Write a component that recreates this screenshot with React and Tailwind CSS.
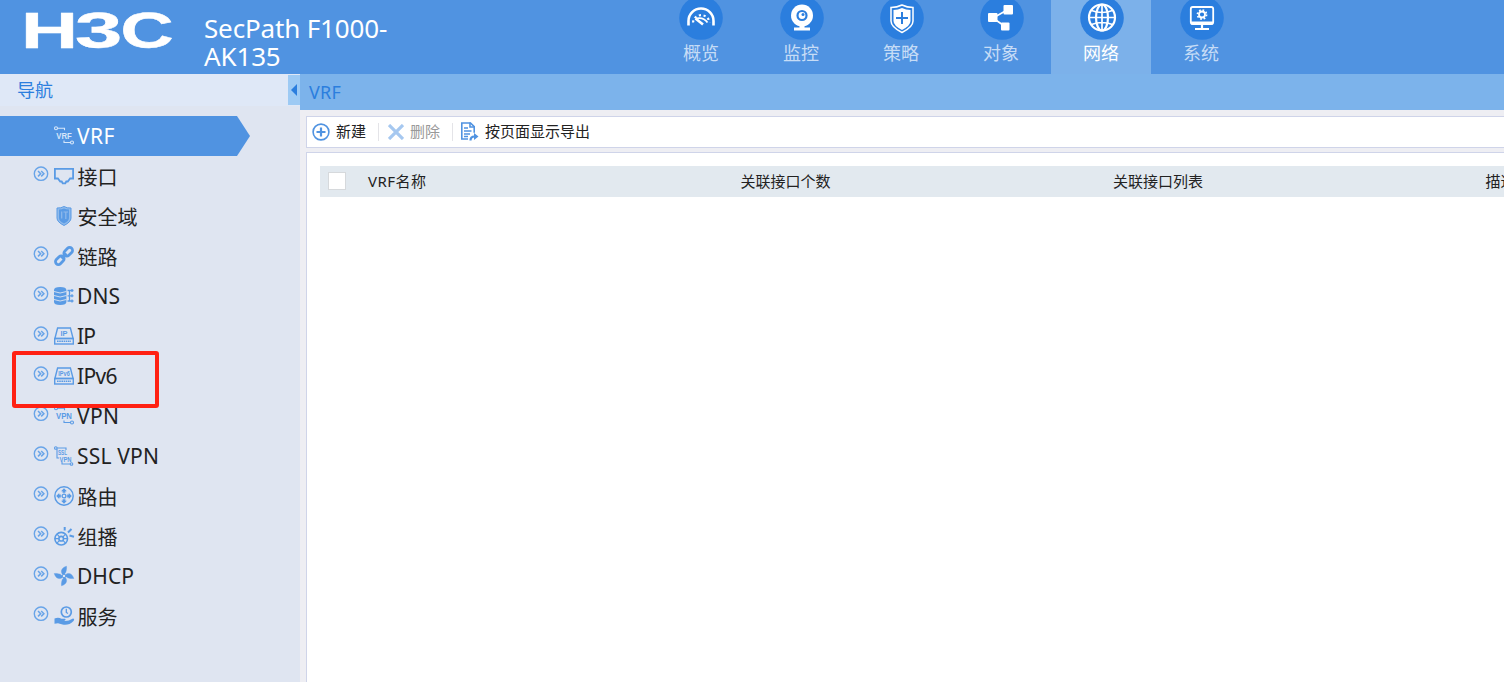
import clsx from 'clsx'

const tabs = [
  { label: '概览', icon: GaugeIcon },
  { label: '监控', icon: CameraIcon },
  { label: '策略', icon: PolicyIcon },
  { label: '对象', icon: ObjectIcon },
  { label: '网络', icon: GlobeIcon, active: true },
  { label: '系统', icon: SystemIcon },
]

const menu = [
  { label: 'VRF', icon: VrfIcon, leaf: true, active: true, tracking: 'tracking-[0.4px]' },
  { label: '接口', icon: PortIcon },
  { label: '安全域', icon: ZoneIcon, leaf: true },
  { label: '链路', icon: LinkIcon },
  { label: 'DNS', icon: DnsIcon, tracking: 'tracking-[0.1px]' },
  { label: 'IP', icon: IpIcon, tracking: 'tracking-[-0.8px]' },
  { label: 'IPv6', icon: Ipv6Icon, marked: true, tracking: 'tracking-[-0.7px]' },
  { label: 'VPN', icon: VpnIcon, tracking: 'tracking-[0.4px]' },
  { label: 'SSL VPN', icon: SslIcon, tracking: 'tracking-[0.2px]' },
  { label: '路由', icon: RouteIcon },
  { label: '组播', icon: MulticastIcon },
  { label: 'DHCP', icon: DhcpIcon, tracking: 'tracking-[0px]' },
  { label: '服务', icon: ServiceIcon },
]

const columns = ['VRF名称', '关联接口个数', '关联接口列表', '描述']

/* ---------- top tab icons, 44x44 ---------- */

function GaugeIcon() {
  return (
    <g fill="none" stroke="#fff">
      <path d="M9.500 29.500V25a12.500 12.500 0 0 1 25 0v4.500" strokeWidth="2.600" />
      <path d="M14 26.500a8.300 8.300 0 0 1 16.500 0" strokeWidth="2.200" strokeDasharray="2.200 2.600" />
      <path d="M16.500 22.500 24 28.500" strokeWidth="2.600" />
      <path d="M17.500 22.500q7-1.500 11 4" strokeWidth="1.800" />
    </g>
  )
}

function CameraIcon() {
  return (
    <g>
      <circle cx="22" cy="19.500" r="11" fill="#fff" />
      <circle cx="22" cy="19.500" r="4.500" fill="none" stroke="#2b7ede" strokeWidth="2.200" />
      <circle cx="23" cy="18.500" r="1.500" fill="#2b7ede" />
      <path d="M19.500 29h5v2.500h5.500v3H14v-3h5.500z" fill="#fff" />
    </g>
  )
}

function PolicyIcon() {
  return (
    <g>
      <path d="M22 9q5 2.500 11 2.500V25q0 6-11 11.500Q11 31 11 25V11.500Q17 11.500 22 9z" fill="none" stroke="#fff" strokeWidth="1.500" />
      <path d="M22 12q4 1.800 8.500 2V25q0 4.500-8.500 9-8.500-4.500-8.500-9V14q4.500-.2 8.500-2z" fill="#fff" />
      <path d="M22 16v12M16 22h12" stroke="#2b7ede" strokeWidth="2" />
    </g>
  )
}

function ObjectIcon() {
  return (
    <g fill="#fff">
      <path d="M13 22 28 13.500M13 22l12 8.500" stroke="#fff" strokeWidth="1.600" />
      <rect x="8" y="17" width="9.500" height="9" rx="1" />
      <rect x="23.500" y="9" width="9.500" height="9.500" rx="1" />
      <rect x="21" y="26.500" width="8.500" height="8" rx="1" />
    </g>
  )
}

function GlobeIcon() {
  return (
    <g fill="none" stroke="#fff" strokeWidth="2.200">
      <circle cx="22" cy="21.500" r="13" />
      <ellipse cx="22" cy="21.500" rx="6" ry="13" />
      <path d="M22 8.500v26M9 21.500h26M11.500 14.500q10.500 4 21 0M11.500 28.500q10.500-4 21 0" strokeWidth="1.700" />
    </g>
  )
}

function SystemIcon() {
  return (
    <g fill="none" stroke="#fff">
      <rect x="10.800" y="11" width="22.400" height="17" rx="2" strokeWidth="1.800" />
      <path d="M11 27h22" strokeWidth="3" />
      <circle cx="22" cy="18.500" r="3" strokeWidth="1.800" />
      <circle cx="22" cy="18.500" r="4.500" strokeWidth="1.800" strokeDasharray="1.700 1.834" />
      <path d="M22 28v4M15 33h14" strokeWidth="2.200" />
    </g>
  )
}

/* ---------- side menu icons, 20x20 ---------- */

function TagText({ children, x = 10, y, size, width }) {
  return (
    <text
      x={x}
      y={y}
      fontSize={size}
      fontWeight="700"
      textAnchor="middle"
      textLength={width}
      lengthAdjust="spacingAndGlyphs"
      fill="currentColor"
      stroke="none"
      fontFamily="Liberation Sans, sans-serif"
    >
      {children}
    </text>
  )
}

function Corners() {
  return (
    <g strokeWidth="1.100">
      <circle cx="2" cy="2.300" r="1.500" />
      <path d="M3.500 2.300h7v2M10 14.500v2h6.500" />
      <circle cx="18" cy="16.500" r="1.500" />
    </g>
  )
}

function VrfIcon() {
  return (
    <g>
      <Corners />
      <TagText y="12.800" size="9.500" width="15.500">VRF</TagText>
    </g>
  )
}

function VpnIcon() {
  return (
    <g>
      <Corners />
      <TagText y="12.800" size="9.500" width="16">VPN</TagText>
    </g>
  )
}

function SslIcon() {
  return (
    <g>
      <g strokeWidth="1.100">
        <circle cx="1.800" cy="2" r="1.300" />
        <path d="M3 2h9v2M3 3v9h2M8 15.500V18h8" />
        <circle cx="17.500" cy="18" r="1.300" />
      </g>
      <TagText x="8.500" y="9.300" size="7" width="9">SSL</TagText>
      <TagText x="11.500" y="15.700" size="7.500" width="12">VPN</TagText>
    </g>
  )
}

function PortIcon() {
  return <path d="M.9 2.900h18.200v9.600h-3l-2.300 3h-1.500l-1 1.800H8.700l-1-1.800H6.200l-2.300-3h-3z" strokeWidth="1.800" />
}

function ZoneIcon() {
  return (
    <g>
      <path d="M3 2q4 .3 7-1.500 3 1.800 7 1.500v10q0 4-7 7.500-7-3.500-7-7.500z" fill="#8fbaeb" strokeWidth="1" />
      <path d="M5 3.500q3 0 5-1 2 1 5 1V12q0 3-5 5.500Q5 15 5 12z" fill="currentColor" stroke="none" />
      <path d="M7.700 5.500v7M9.500 6h4.500M11.800 6v7" stroke="#8fbaeb" strokeWidth="1.200" />
    </g>
  )
}

function LinkIcon() {
  return (
    <g strokeWidth="2.800">
      <rect x="-4.900" y="-2.900" width="9.800" height="5.800" rx="2.900" transform="translate(14.200 5.800) rotate(-45)" />
      <rect x="-4.900" y="-2.900" width="9.800" height="5.800" rx="2.900" transform="translate(5.800 14.200) rotate(-45)" />
      <path d="m7.500 12.500 5-5" />
    </g>
  )
}

function DnsIcon() {
  return (
    <g>
      <path d="M0 4q0-3 6.200-3t6.200 3v12q0 3-6.200 3T0 16z" fill="currentColor" stroke="none" />
      <path d="M0 5.500q6 3 12.400 0M0 9.500q6 3 12.400 0M0 13.500q6 3 12.400 0" stroke="#dfe5f1" strokeWidth=".9" />
      <path d="M13.500 4.500h6M13.500 9.800h6M13.500 15h6M15.500 4.500V15M18 3v3M18 8.300v3M18 13.500v3" strokeWidth="1.300" />
    </g>
  )
}

function Box({ tag, size, width }) {
  return (
    <g>
      <path d="M.9 12.500 3.600 2h12.800l2.700 10.500z" strokeWidth="1.400" />
      <rect x=".7" y="12.500" width="18.600" height="5.500" strokeWidth="1.400" />
      <path d="M3 15.300h14" strokeWidth="1.600" strokeDasharray="1.600 .6" />
      <TagText y="9.800" size={size} width={width}>{tag}</TagText>
    </g>
  )
}

function IpIcon() {
  return <Box tag="IP" size="8" width="7" />
}

function Ipv6Icon() {
  return <Box tag="IPv6" size="7" width="11.500" />
}

function RouteIcon() {
  return (
    <g>
      <circle cx="10" cy="10" r="9.200" strokeWidth="1.400" />
      <circle cx="10" cy="10" r="1.900" strokeWidth="1.300" />
      <path d="m10 2.200 2.900 3h-1.500v1.600H8.600V5.200H7.100zM10 17.800l2.900-3h-1.500v-1.600H8.600v1.600H7.100zM2.200 10l3-2.900v1.500h1.600v2.800H5.200v1.500zM17.800 10l-3-2.900v1.500h-1.600v2.800h1.600v1.500z" fill="currentColor" stroke="none" />
    </g>
  )
}

function MulticastIcon() {
  return (
    <g strokeWidth="1.600">
      <circle cx="7.200" cy="12.700" r="6.300" />
      <circle cx="7.200" cy="12.700" r="2.300" />
      <path d="m3 8.200 2.700 3M11.500 8.200l-2.700 3M3 17.200l2.700-3M11.500 17.200l-2.700-3M.8 12.700h4M9.600 12.700h4" strokeWidth="1.200" />
      <path d="M10.700 4.500V1M14 6.500 17.500 3M15.500 9.500l4.500 1.300" strokeWidth="2" />
    </g>
  )
}

function DhcpIcon() {
  const blade = 'M9 8.800C6.500 6.500 6.500 2 12.500.2c.3 2-.2 4.500-.5 5.300-.5 1.800-1.500 2.800-3 3.300z'
  return (
    <g fill="currentColor" strokeWidth=".4">
      <path d={blade} />
      <path d={blade} transform="rotate(90 10 10)" />
      <path d={blade} transform="rotate(180 10 10)" />
      <path d={blade} transform="rotate(270 10 10)" />
      <circle cx="10" cy="10" r="1.800" fill="#dfe5f1" stroke="currentColor" strokeWidth="1" />
    </g>
  )
}

function ServiceIcon() {
  return (
    <g>
      <circle cx="12.300" cy="6" r="5" strokeWidth="1.700" />
      <path d="M12.300 2.800v3.700l1.700 1" strokeWidth="1.300" />
      <path d="M.5 12.500q4-1.500 7 .3h3.500q1.500 1.200-1 2.200 4 .5 9-2.500 2 .5.500 2.500-5 5-11 3.500L4 17.300l-3.500.4z" fill="currentColor" stroke="none" />
    </g>
  )
}

function Expander() {
  return (
    <svg className="-mt-[5px] h-4 w-4" viewBox="0 0 16 16" fill="none" stroke="#68a4e8">
      <circle cx="8" cy="7.700" r="6.700" strokeWidth="1.400" />
      <path d="m5 5 2.700 2.700L5 10.400M8.200 5l2.700 2.700-2.700 2.700" strokeWidth="1.500" />
    </svg>
  )
}

function Header() {
  return (
    <header className="flex h-[74px] bg-[#5093e1]">
      <div className="w-[204px] shrink-0">
        <svg className="h-[74px] w-[204px]" viewBox="0 0 204 74">
          <g fill="#fff" stroke="#fff" strokeWidth=".5" fontFamily="Liberation Sans, Arial, sans-serif" fontWeight="700" fontSize="50">
            <text transform="translate(21 47.500) scale(1.580 1)">H</text>
            <text transform="translate(75 47.500) scale(1.700 1)">3</text>
            <text transform="translate(120.500 47.500) scale(1.470 1)">C</text>
          </g>
        </svg>
      </div>
      <div className="w-[447px] shrink-0 pt-[14px] text-[26px] leading-[28px] tracking-[-0.150px] text-white">
        SecPath F1000-
        <br />
        AK135
      </div>
      <nav className="flex">
        {tabs.map(({ label, icon: Icon, active }, i) => (
          <div
            key={label}
            className={clsx(
              'flex w-[100px] flex-col items-center',
              active ? 'bg-[#7cb1ea] text-white' : 'text-[#c6dcf6]'
            )}
          >
            <svg className={clsx('-mt-1 h-11 w-11 shrink-0', i > 0 && 'ml-[2px]')} viewBox="0 0 44 44">
              <circle cx="22" cy="22" r="21.800" fill="#2b7ede" />
              <Icon />
            </svg>
            <span className="-mt-px text-[18px] leading-[28px]">{label}</span>
          </div>
        ))}
      </nav>
    </header>
  )
}

function Sidebar() {
  return (
    <aside className="w-[300px] shrink-0 bg-[#dfe5f1]">
      <div className="flex h-8 bg-[#dfe8f7]">
        <div className="flex-1 pl-[17px] text-[18px] leading-[32px] text-[#2b7ede]">导航</div>
        <div className="mt-px flex h-[30px] w-3 items-center justify-center bg-[#9dcaf4]">
          <svg className="h-3 w-2" viewBox="0 0 8 12">
            <path d="M7 0v12L1 6z" fill="#2b7ede" />
          </svg>
        </div>
      </div>
      <ul className="pt-[10px]">
        {menu.map(({ label, icon: Icon, leaf, active, marked, tracking }) => (
          <li
            key={label}
            className={clsx(
              'relative flex h-10 items-center pl-[33px] text-[20px] leading-[38px]',
              active
                ? 'w-[250px] bg-[#5093e1] text-white [clip-path:polygon(0_0,237px_0,100%_50%,237px_100%,0_100%)]'
                : 'text-[#222]'
            )}
          >
            <div className="w-[21px] shrink-0">{!leaf && <Expander />}</div>
            <svg
              className={clsx('h-5 w-5 shrink-0 overflow-visible', active ? 'text-[#d5e6fa]' : 'text-[#5a9be5]')}
              viewBox="0 0 20 20"
              fill="none"
              stroke="currentColor"
            >
              <Icon />
            </svg>
            <span className={clsx('whitespace-nowrap', tracking ? 'pl-[3px] text-[21px]' : 'pt-[3px] pl-[3.500px]', tracking)}>
              {label}
            </span>
            {marked && (
              <div className="absolute -top-[5px] left-3 z-10 h-[57px] w-[147px] rounded-[3px] border-4 border-[#ff2113]" />
            )}
          </li>
        ))}
      </ul>
    </aside>
  )
}

function Toolbar() {
  return (
    <div className="flex h-8 items-center border border-r-0 border-[#cfd4e9] bg-white pl-[5px] text-[15px] leading-[28px] text-[#222]">
      <svg className="mr-[6px] h-[18px] w-[18px]" viewBox="0 0 18 18" fill="none" stroke="#5093e1">
        <circle cx="9" cy="9" r="7.900" strokeWidth="1.600" />
        <path d="M9 4.500v9M4.500 9h9" strokeWidth="2.200" />
      </svg>
      <span className="-mt-[2px]">新建</span>
      <div className="ml-3 h-[18px] w-px bg-[#e4e4e8]" />
      <svg className="mr-[6px] ml-[9px] h-4 w-4" viewBox="0 0 16 16" stroke="#a6c8f0" strokeWidth="3.200">
        <path d="m1 1 14 14M15 1 1 15" />
      </svg>
      <span className="-mt-[2px] text-[#999]">删除</span>
      <div className="ml-3 h-[18px] w-px bg-[#e4e4e8]" />
      <svg className="mr-[6px] ml-[7px] h-5 w-[19px]" viewBox="0 0 19 20" fill="none" stroke="#5093e1">
        <path d="M8 17H1.800V1h8.700l3.700 3.700v6" strokeWidth="1.600" />
        <path d="M10 .5V5h4.500" strokeWidth="1.600" />
        <path d="M4 6h4M4 9h7.500M4 12h6M4 14.500h4" strokeWidth="1.400" />
        <path d="M10.500 18.500q0-4 4-4" strokeWidth="2.200" />
        <path d="M14 11 18.500 14.500 14 18z" fill="#5093e1" stroke="none" />
      </svg>
      <span className="-mt-[2px]">按页面显示导出</span>
    </div>
  )
}

export default function App() {
  return (
    <div className="flex h-[682px] w-[1504px] flex-col overflow-hidden font-['Noto_Sans','Noto_Sans_CJK_SC',sans-serif]">
      <Header />
      <div className="flex min-h-0 flex-1">
        <Sidebar />
        <main className="flex min-w-0 flex-1 flex-col bg-[#eeeef3]">
          <div className="h-9 shrink-0 bg-[#7cb3eb] pl-[9px] text-[18px] leading-[36px] tracking-[0.300px] text-[#2b7ede]">VRF</div>
          <div className="flex min-h-0 flex-1 flex-col gap-1 pt-[6px] pl-[6px]">
            <Toolbar />
            <div className="min-h-0 flex-1 overflow-hidden border-t border-l border-[#cfd4e9] bg-white pt-[13px] pl-[13px]">
              {/* Table header */}
              <div className="flex h-[31px] items-center bg-[#e2e9ef] text-[15px] text-[#222]">
                <div className="w-[48px] shrink-0 pl-2">
                  <div className="-mt-px h-[18px] w-[18px] border border-[#d6d9dc] bg-white" />
                </div>
                {columns.map((c, i) => (
                  <div key={c} className={clsx('w-[372.500px] shrink-0 whitespace-nowrap', i === 0 && 'tracking-[0.500px]')}>
                    {c}
                  </div>
                ))}
              </div>
            </div>
          </div>
        </main>
      </div>
    </div>
  )
}
